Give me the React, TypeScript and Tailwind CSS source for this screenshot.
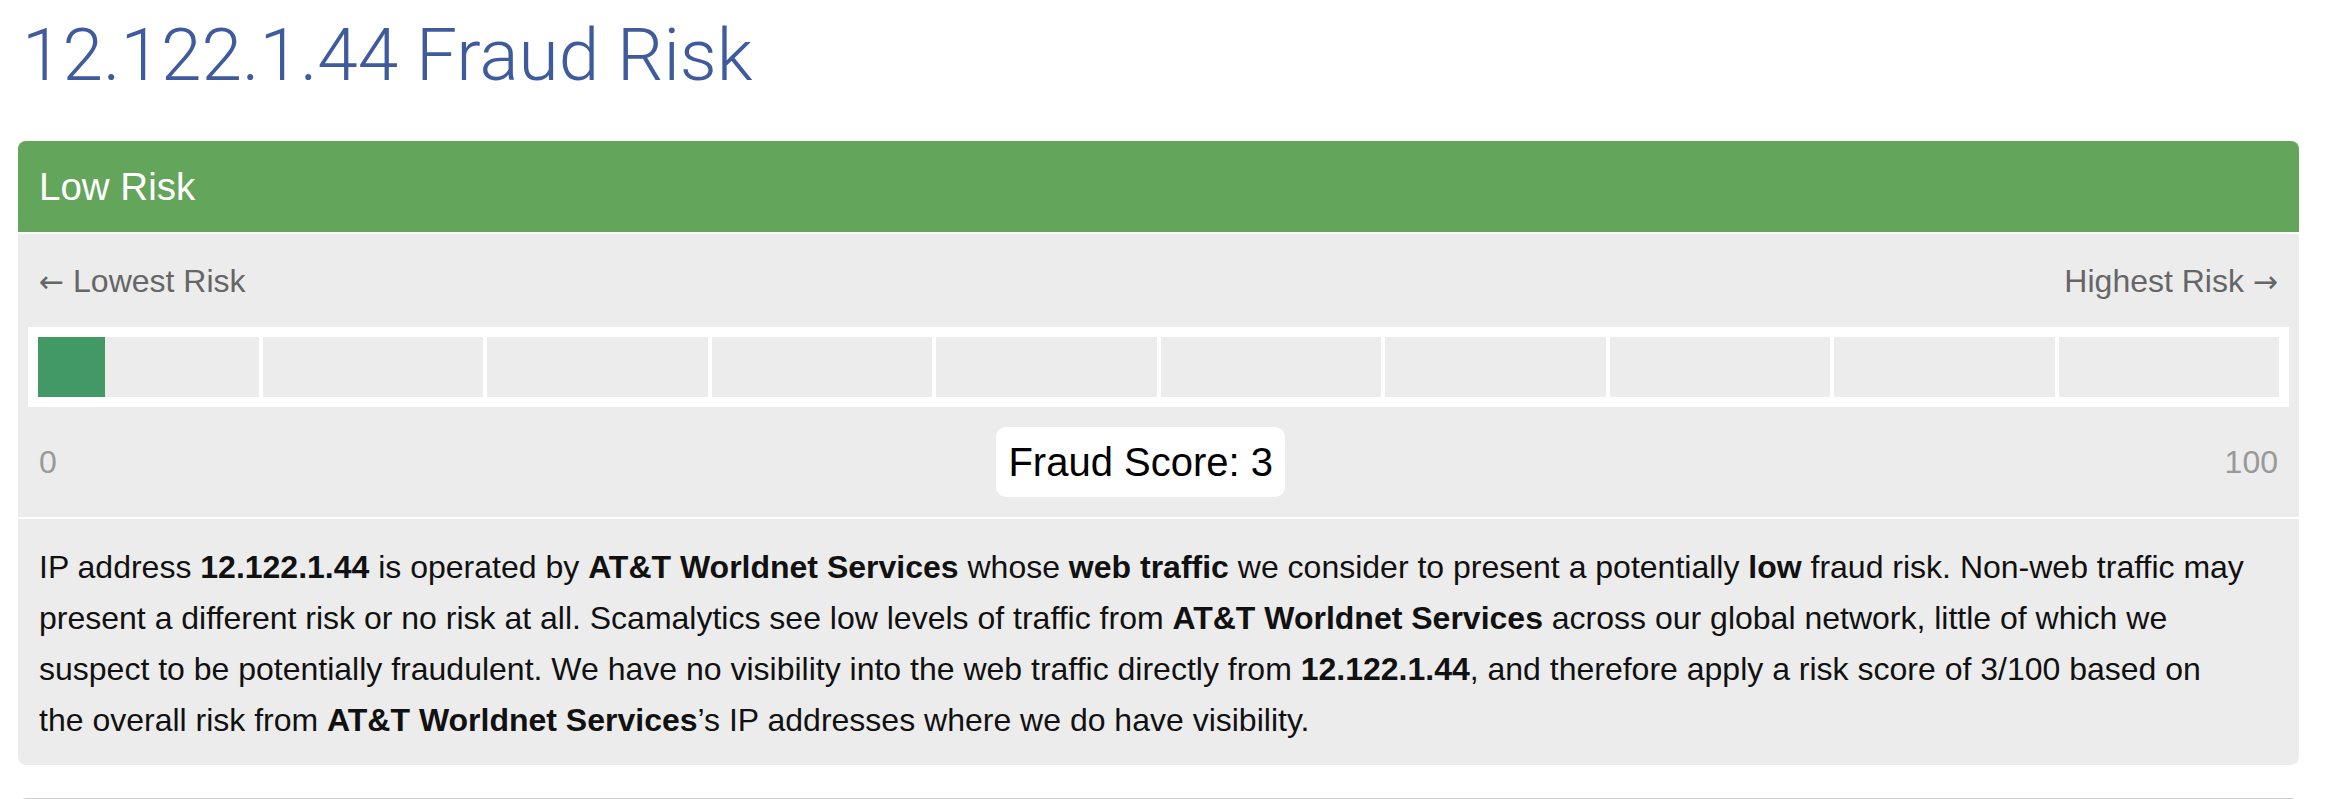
const score = 3;
const cells = Array.from({ length: 10 }, (_, i) => i);

export default function App() {
  return (
    <div className="min-h-screen bg-white pl-[18px] pr-[32px] font-['Liberation_Sans',Arial,sans-serif]">
      <h1 className="pt-[13px] pl-[4px] font-['Roboto',sans-serif] text-[73px] font-light leading-[84px] text-[#3f5b9d]">
        12.122.1.44 Fraud Risk
      </h1>

      <section className="mt-[44px] overflow-hidden rounded-lg bg-[#ececec]">
        <header className="flex h-[93px] items-center border-b-2 border-white bg-[#63a55b] px-[21px] text-[38.5px] text-white">
          Low Risk
        </header>

        <div className="border-b-2 border-white px-[10px] pt-[24px] pb-[20px]">
          <div className="flex justify-between px-[11px] text-[32px] leading-[46px] text-[#666]">
            <span>
              <span className="font-['DejaVu_Sans',sans-serif] text-[30px]">←</span> Lowest Risk
            </span>
            <span>
              Highest Risk <span className="font-['DejaVu_Sans',sans-serif] text-[30px]">→</span>
            </span>
          </div>

          <div className="mt-[22px] bg-white p-[10px]">
            <div className="relative flex gap-[4px]">
              {cells.map((i) => (
                <div key={i} className="h-[60px] flex-1 bg-[#ececec]" />
              ))}
              <div className="absolute inset-y-0 left-0 bg-[#439966]" style={{ width: `${score}%` }} />
            </div>
          </div>

          <div className="mt-[20px] flex items-center justify-between px-[11px] text-[32px] text-[#999]">
            <span>0</span>
            <span className="flex h-[70px] items-center rounded-[10px] bg-white px-[12px] text-[40px] text-black">
              Fraud Score: {score}
            </span>
            <span>100</span>
          </div>
        </div>

        <p className="px-[21px] pt-[23px] pb-[19px] text-[32px] leading-[51px] text-[#111]">
          IP address <b>12.122.1.44</b> is operated by <b>AT&amp;T Worldnet Services</b> whose <b>web traffic</b> we
          consider to present a potentially <b>low</b> fraud risk. Non-web traffic may
          <br />
          present a different risk or no risk at all. Scamalytics see low levels of traffic from{" "}
          <b>AT&amp;T Worldnet Services</b> across our global network, little of which we
          <br />
          suspect to be potentially fraudulent. We have no visibility into the web traffic directly from{" "}
          <b>12.122.1.44</b>, and therefore apply a risk score of 3/100 based on
          <br />
          the overall risk from <b>AT&amp;T Worldnet Services</b>’s IP addresses where we do have visibility.
        </p>
      </section>

      <section className="mt-[33px] h-[80px] rounded-t-lg border border-[#cccccc]" />
    </div>
  );
}
